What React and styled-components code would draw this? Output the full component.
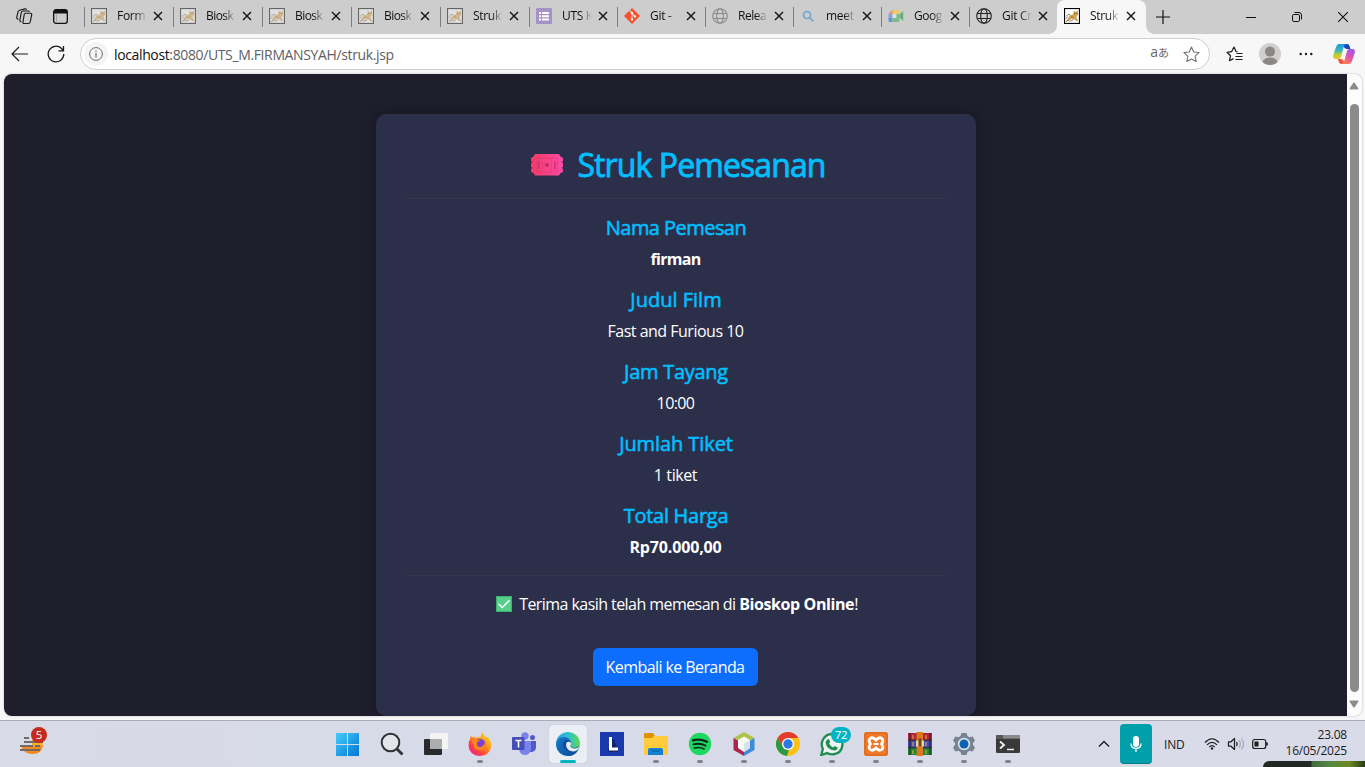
import React from "react";
import styled, { createGlobalStyle, css } from "styled-components";

const Global = createGlobalStyle`
  * { box-sizing: border-box; }
  html, body { margin: 0; padding: 0; height: 100%; overflow: hidden; }
  body { font-family: "Open Sans", "Noto Sans", "Noto Sans CJK JP", sans-serif; }
  svg { display: block; flex: none; }
`;

const Window = styled.div`
  position: relative;
  display: flex;
  flex-direction: column;
  width: 1365px;
  height: 767px;
  overflow: hidden;
  background: #f7f7f7;
`;

/* ---------- tab strip ---------- */
const TabStrip = styled.div`
  display: flex;
  height: 34px;
  flex: none;
  background: #cdcdcd;
`;
const StripTools = styled.div`
  display: flex;
  align-items: center;
  gap: 20px;
  width: 84px;
  flex: none;
  padding: 0 0 2px 16px;
`;
const TabBox = styled.div`
  position: relative;
  display: flex;
  align-items: center;
  width: ${(p) => p.$w}px;
  height: 34px;
  padding: 0 0 2px 7px;
  flex: none;
  ${(p) =>
    p.$active
      ? css`
          background: #f7f7f7;
          border-radius: 8px 8px 0 0;
          &::before, &::after {
            content: "";
            position: absolute;
            bottom: 0;
            width: 8px;
            height: 8px;
          }
          &::before { left: -8px; background: radial-gradient(circle at 0 0, transparent 7.5px, #f7f7f7 8px); }
          &::after { right: -8px; background: radial-gradient(circle at 100% 0, transparent 7.5px, #f7f7f7 8px); }
        `
      : css`
          background: linear-gradient(#7c7c7c, #7c7c7c) 0 7px / 1px 20px no-repeat;
        `}
`;
const TabTitle = styled.span`
  width: 30px;
  margin: 0 6px 0 10px;
  white-space: nowrap;
  font-size: 12px;
  line-height: 16px;
  letter-spacing: ${(p) => p.$ls ?? -0.3}px;
  color: #111;
  mask-image: linear-gradient(90deg, #000 60%, transparent 100%);
`;
const WindowControls = styled.div`
  display: flex;
  align-items: center;
  flex: 1;
  padding-bottom: 1px;
`;
const ControlCell = styled.div`
  display: flex;
  justify-content: center;
  width: 46px;
  flex: none;
  margin-left: ${(p) => p.$ml || 0}px;
`;

/* ---------- toolbar ---------- */
const Toolbar = styled.div`
  display: flex;
  align-items: center;
  height: 40px;
  flex: none;
  padding-left: 11px;
`;
const NavButtons = styled.div`
  display: flex;
  gap: 18px;
  width: 69px;
`;
const AddressBar = styled.div`
  display: flex;
  align-items: center;
  width: 1130px;
  height: 32px;
  flex: none;
  padding: 0 9px 0 8px;
  border: 1px solid #cfcfd3;
  border-radius: 16px;
  background: #fff;
`;
const InfoBadge = styled.div`
  display: flex;
  align-items: center;
  justify-content: center;
  width: 24px;
  height: 24px;
  margin: 0 6px 0 -5px;
  border-radius: 12px;
  background: #f4f4f4;
`;
const Url = styled.span`
  flex: 1;
  font-size: 14px;
  letter-spacing: -0.37px;
  color: #5f6064;
  b { font-weight: 400; color: #111; }
`;
const Translate = styled.span`
  display: flex;
  align-items: baseline;
  margin: -3px 14px 0 0;
  font-size: 14px;
  line-height: 16px;
  color: #6a6a6a;
  small { font-size: 11px; }
`;
const ToolbarActions = styled.div`
  display: flex;
  align-items: center;
  padding-left: 16px;
`;
const Avatar = styled.div`
  margin: 0 18px 0 16px;
`;
const CopilotSlot = styled.div`
  margin-left: 20px;
`;

/* ---------- page ---------- */
const Viewport = styled.div`
  display: flex;
  height: 642px;
  flex: none;
  margin: 0 3px 0 4px;
  border-radius: 8px;
  overflow: hidden;
  background: #fcfcfc;
  box-shadow: 0 0 2px rgba(0, 0, 0, 0.3);
`;
const Page = styled.main`
  display: flex;
  justify-content: center;
  align-items: flex-start;
  width: 1343px;
  height: 642px;
  flex: none;
  padding: 40px 0 0 1px;
  background: #1f1e2d;
`;
const Card = styled.section`
  width: 600px;
  height: 602px;
  padding: 30px;
  border-radius: 10px;
  background: #2c2f4a;
  box-shadow: 0 0 15px rgba(0, 0, 0, 0.3);
  text-align: center;
  color: #fff;
`;
const Title = styled.h2`
  display: flex;
  justify-content: center;
  align-items: center;
  gap: 14px;
  height: 38px;
  margin: 0;
  padding: 3px 0 0 5px;
  font-size: 32px;
  line-height: 38px;
  font-weight: 500;
  letter-spacing: -0.9px;
  color: #00bfff;
  -webkit-text-stroke: 0.8px #00bfff;
  white-space: nowrap;
`;
const Rule = styled.hr`
  height: 1px;
  margin: 16px 0;
  border: 0;
  background: #3a374d;
`;
const Label = styled.h5`
  margin: 0 0 8px;
  padding-top: 1px;
  height: 24px;
  font-size: 20px;
  line-height: 24px;
  font-weight: 500;
  letter-spacing: ${(p) => p.$ls}px;
  color: #00bfff;
  -webkit-text-stroke: 0.55px #00bfff;
`;
const Value = styled.p`
  margin: 0 0 16px;
  padding-right: 1px;
  font-size: 16px;
  line-height: 24px;
  letter-spacing: ${(p) => p.$ls}px;
  font-weight: ${(p) => (p.$strong ? 700 : 400)};
`;
const Thanks = styled.p`
  display: flex;
  justify-content: center;
  align-items: center;
  gap: 7px;
  margin: 0 0 32px;
  padding-left: 2px;
  font-size: 16px;
  line-height: 24px;
  letter-spacing: -0.56px;
  white-space: nowrap;
  b { letter-spacing: -0.4px; }
`;
const BackButton = styled.button`
  width: 165px;
  height: 38px;
  margin-right: 2px;
  padding: 0;
  border: 0;
  border-radius: 6px;
  background: #0d6efd;
  color: #fff;
  font: inherit;
  font-size: 16px;
  letter-spacing: -0.58px;
  white-space: nowrap;
`;
const Scrollbar = styled.div`
  display: flex;
  flex-direction: column;
  align-items: center;
  width: 14px;
  padding: 8px 0 8px;
`;
const Thumb = styled.div`
  width: 9px;
  height: 589px;
  margin: 14px 0 8px;
  border-radius: 5px;
  background: #8b8b8b;
`;

/* ---------- taskbar ---------- */
const Taskbar = styled.footer`
  position: relative;
  display: flex;
  height: 47px;
  margin-top: 4px;
  flex: none;
  border-top: 1px solid #a9abb5;
  background: linear-gradient(90deg, #d8dae6, #d7dae8 40%, #dadbe9);
`;
const Widgets = styled.div`
  position: relative;
  width: 326px;
  flex: none;
  padding: 12px 0 0 19px;
`;
const Count = styled.span`
  position: absolute;
  left: ${(p) => p.$x}px;
  top: ${(p) => p.$y}px;
  width: ${(p) => p.$w}px;
  height: 16px;
  border-radius: 8px;
  background: ${(p) => p.$bg};
  color: #fff;
  font-size: 11.5px;
  line-height: 16px;
  letter-spacing: -0.3px;
  text-align: center;
`;
const Apps = styled.div`
  display: flex;
  width: 704px;
  flex: none;
`;
const AppSlot = styled.div`
  position: relative;
  display: flex;
  flex-direction: column;
  align-items: center;
  width: 38px;
  height: 38px;
  margin: 4px 3px 0;
  padding-top: 7px;
  flex: none;
  border-radius: 4px;
  ${(p) => p.$active && css`background: #eceef5; box-shadow: 0 0 1px #aaaebb;`}
`;
const Running = styled.i`
  width: ${(p) => (p.$active ? 16 : 6)}px;
  height: 3px;
  margin-top: 4px;
  border-radius: 2px;
  background: ${(p) => (p.$active ? "#00b4bd" : "#82838c")};
`;
const Tray = styled.div`
  display: flex;
  align-items: center;
  flex: 1;
  padding-left: 68px;
`;
const Mic = styled.div`
  display: flex;
  align-items: center;
  justify-content: center;
  width: 32px;
  height: 40px;
  margin: 0 12px 0 10px;
  border-radius: 4px;
  background: #009fa9;
  border-bottom: 1px solid #007f87;
`;
const Lang = styled.span`
  width: 40px;
  font-size: 12px;
  letter-spacing: -0.2px;
  color: #1a1a1a;
`;
const Clock = styled.div`
  flex: 1;
  padding: 0 18px 2px 0;
  font-size: 12px;
  line-height: 16px;
  letter-spacing: -0.22px;
  text-align: right;
  white-space: nowrap;
  color: #1a1a1a;
`;
const WallpaperEdge = styled.div`
  position: absolute;
  right: 0;
  bottom: 0;
  width: 102px;
  height: 6px;
  border-radius: 7px 0 0 0;
  background: linear-gradient(90deg, #222824 0 48px, #406b3b 49px, #548744 66px, #6d8c20 86px, #263b14 102px);
`;

/* ---------- drawings ---------- */
const Close = ({ s = 10, w = 1.4 }) => (
  <svg width={s} height={s} viewBox="0 0 10 10" stroke="#111" strokeWidth={w} fill="none">
    <path d="M1 1l8 8M9 1L1 9" />
  </svg>
);

const Cat = ({ on }) => (
  <svg width="16" height="16" viewBox="0 0 16 16" opacity={on ? 1 : 0.5}>
    <rect x=".5" y=".5" width="15" height="15" fill={on ? "#fff" : "#f4f4f4"} stroke="#000" strokeWidth="1.2" />
    <path d="M2.500 13l2-3.500 1.500-2.500 3-.5.500-1.500V2.500l1.800 1.300h1.200L14 2.500v4.300l-1.500 1.700.3 2 1.700 2.800h-2l-2.700-2.300-2.600-.2-2 2z" fill="#d3a04b" />
    <path d="M2 8.500q1.500-2.500 4-2M1.800 10.500l2-1.700M5.500 13.300q3-.6 4-2.200" stroke="#777d84" strokeWidth="1" fill="none" />
    <path d="M2 13.600l3-1.800M7 8.800l2 .6" stroke="#8a6630" strokeWidth=".9" fill="none" />
    <circle cx="10.700" cy="5.200" r=".55" fill="#5b4020" /><circle cx="12.800" cy="5.200" r=".55" fill="#5b4020" />
  </svg>
);
const Globe = ({ c }) => (
  <svg width="16" height="16" viewBox="0 0 16 16" fill="none" stroke={c} strokeWidth="1.1">
    <circle cx="8" cy="8" r="7.3" />
    <ellipse cx="8" cy="8" rx="3.300" ry="7.300" />
    <path d="M1.300 5.500h13.400M1.300 10.500h13.400" />
  </svg>
);
const FormIcon = () => (
  <svg width="16" height="16" viewBox="0 0 16 16">
    <rect width="16" height="16" rx="1" fill="#a691c9" />
    <path d="M3 4h2v2H3zM6 4h7v2H6zM3 7.200h2v2H3zM6 7.200h7v2H6zM3 10.400h2v2H3zM6 10.400h7v2H6z" fill="#fff" />
  </svg>
);
const GitIcon = () => (
  <svg width="16" height="16" viewBox="0 0 16 16">
    <path d="M8 0l8 8-8 8-8-8z" fill="#f4502d" />
    <path d="M5.500 2.500L8 5v6.500M8 5.500l3 3" stroke="#e8dcd8" strokeWidth="1.100" fill="none" />
    <g fill="#eee"><circle cx="8" cy="5" r="1.200" /><circle cx="8" cy="11.500" r="1.200" /><circle cx="11" cy="8.400" r="1.200" /></g>
  </svg>
);
const SearchTab = () => (
  <svg width="16" height="16" viewBox="0 0 16 16" fill="none" stroke="#70a5d2" strokeWidth="1.700">
    <circle cx="7" cy="7" r="3.500" /><path d="M9.500 9.500l4 4" />
  </svg>
);
const Meet = () => (
  <svg width="16" height="16" viewBox="0 0 16 16">
    <path d="M4 2h7.500v4H4z" fill="#e8cc69" /><path d="M.5 6L4.500 2v4z" fill="#e9877c" />
    <path d="M.5 6h4v4h-4z" fill="#82a6df" /><path d="M.5 10h4v4h-3q-1 0-1-1z" fill="#6a93d5" />
    <path d="M4.500 10H8l3.500-2v5q0 1-1 1h-6z" fill="#79bd89" /><path d="M11.500 6.500L15.200 3v10l-3.700-3.500z" fill="#69ad77" />
    <path d="M4.500 6h4v4h-4z" fill="#dedede" /><path d="M8.500 6h3v3l-3 1z" fill="#86b68c" />
  </svg>
);
const Workspaces = () => (
  <svg width="17" height="17" viewBox="0 0 17 17" fill="none" stroke="#1b1b1b" strokeWidth="1.150" strokeLinejoin="round" strokeLinecap="round">
    <path d="M9.300 5.200h5.200q1.500 0 1.200 1.500l-1.500 7.300q-.3 1.500-1.800 1.500H8.200q-1.500 0-1.200-1.500l1.200-7.500q.3-1.300 1.100-1.300z" />
    <path d="M5 13.800q-1.400-.4-1.100-1.800L5.200 4.800Q5.500 3 7.200 3h5q.8 0 1 .5" />
    <path d="M2 11.200Q.5 10.600.8 9.200L2 3.800q.3-1.200 1.500-1.500L9 .9q1-.2 1.400.4" />
  </svg>
);
const TabActions = () => (
  <svg width="15" height="15" viewBox="0 0 15 15">
    <rect x=".7" y=".7" width="13.600" height="13.600" rx="2.300" fill="none" stroke="#111" strokeWidth="1.300" />
    <path d="M.5 4.500V3q0-2.500 2.500-2.500h9q2.500 0 2.500 2.500v1.500z" fill="#111" />
    <path d="M3 5.200h.7v8h-.7z" fill="#999" />
  </svg>
);
const Back = () => (
  <svg width="18" height="18" viewBox="0 0 18 18" fill="none" stroke="#1b1b1b" strokeWidth="1.200"><path d="M17 9H1.500M8 2L1 9l7 7" /></svg>
);
const Reload = () => (
  <svg width="18" height="18" viewBox="0 0 18 18" fill="none" stroke="#1b1b1b" strokeWidth="1.300"><path d="M16.800 9a7.800 7.800 0 1 1-2.500-5.700L16.300 5.500M16.500 1v4.800H11.500" /></svg>
);
const Info = () => (
  <svg width="14" height="14" viewBox="0 0 14 14" fill="none" stroke="#6d6d6d"><circle cx="7" cy="7" r="6.400" /><path d="M7 6v4.500M7 3.500v1.300" strokeWidth="1.200" /></svg>
);
const star = "M8 1l2.100 4.600 5 .6-3.700 3.400 1 5L8 12.200 3.600 14.600l1-5L.9 6.200l5-.6z";
const Star = () => (
  <svg width="17" height="17" viewBox="0 0 16 16" fill="none" stroke="#6f6f6f" strokeLinejoin="round"><path d={star} /></svg>
);
const Favorites = () => (
  <svg width="17" height="17" viewBox="0 0 17 17" fill="none" stroke="#1b1b1b" strokeWidth="1.200" strokeLinejoin="round">
    <path d="M11.500 5.800L10 5.500 8 1 5.700 5.600 1 6.300l3.500 3.400-1 5 4-2.100M10.500 7.500h6M9.500 10.500h7M9.500 13.500h7" />
  </svg>
);
const AvatarPic = () => (
  <svg width="22" height="22" viewBox="0 0 22 22">
    <circle cx="11" cy="11" r="11" fill="#d2d0ce" />
    <circle cx="11" cy="8.600" r="5" fill="#8b8885" />
    <path d="M3.500 19q1.500-4.500 7.500-4.500t7.500 4.500q-3 3-7.500 3t-7.500-3z" fill="#8b8885" />
  </svg>
);
const Dots = () => (
  <svg width="14" height="4" viewBox="0 0 14 4" fill="#1b1b1b"><circle cx="1.700" cy="2" r="1.200" /><circle cx="7" cy="2" r="1.200" /><circle cx="12.300" cy="2" r="1.200" /></svg>
);
const Copilot = () => (
  <svg width="22" height="22" viewBox="0 0 22 22">
    <defs>
      <linearGradient id="cpA" x1="0" y1="0" x2="0" y2="1"><stop offset="0" stopColor="#2096dc" /><stop offset=".45" stopColor="#38b8bf" /><stop offset=".7" stopColor="#b5cf35" /><stop offset="1" stopColor="#f2bf21" /></linearGradient>
      <linearGradient id="cpB" x1=".7" y1="0" x2=".2" y2="1"><stop offset="0" stopColor="#9b57ec" /><stop offset=".5" stopColor="#e353a9" /><stop offset="1" stopColor="#f98345" /></linearGradient>
    </defs>
    <path d="M11 1h3q2 0 2.500 2l1 3h-4q-2 0-3-3z" fill="#1446bd" />
    <path d="M6 1h7q-2 1-2.600 4L8 14q-.7 2-2.500 2H3Q-.7 16 .3 12L3 4Q4 1 6 1z" fill="url(#cpA)" />
    <path d="M5 16h3q2 0 3 3l-1 2H8.500Q6 21 5.600 18z" fill="#f3543a" />
    <path d="M16 21H9q2-1 2.600-4L14 8q.7-2 2.500-2H19q3.700 0 2.700 4L19 18q-1 3-3 3z" fill="url(#cpB)" />
  </svg>
);
const Ticket = () => (
  <svg width="32" height="22" viewBox="0 0 32 22">
    <defs><linearGradient id="tk"><stop stopColor="#f53a65" /><stop offset="1" stopColor="#fb4ca5" /></linearGradient></defs>
    <path d="M4 0h24l1.500 2.500L32 4v3l-1.500 1 1.500 1v4l-1.500 1 1.500 1v3l-2.500 1L28 21.500H4L2.500 19 0 18v-3l1.500-1L0 13V9l1.500-1L0 7V4l2.500-1.500z" fill="url(#tk)" />
    <g fill="none" stroke="#b92f6a" opacity=".8"><path d="M7.800 7v8M24 7v8" strokeWidth="1.500" /><path d="M5.500 4h21v14h-21zM11.500 4v14M20.500 4v14" strokeWidth=".6" opacity=".6" /></g>
    <circle cx="16" cy="11" r="1.900" fill="#b92f6a" />
  </svg>
);
const Check = () => (
  <svg width="16" height="16" viewBox="0 0 16 16"><rect width="16" height="16" rx="1" fill="#55d08a" /><rect x=".5" y=".5" width="15" height="15" rx="1" fill="none" stroke="#3eaf6c" /><path d="M3 8.300l3.300 3.200L13 4.800" fill="none" stroke="#fff" strokeWidth="1.500" strokeLinecap="round" /></svg>
);
const Arrow = ({ down }) => (
  <svg width="10" height="8" viewBox="0 0 10 8"><path d={down ? "M1 .5h8l.5 1L5.500 7.500h-1L.5 1.500z" : "M1 7.500h8l.5-1L5.500.5h-1L.5 6.500z"} fill="#8b8b8b" /></svg>
);

const Burger = () => (
  <svg width="26" height="22" viewBox="0 0 26 22">
    <path d="M2 12h22q-1 9-10.500 9T2 12z" fill="#f38a1d" /><path d="M13 7h11q0 4-1 6H13z" fill="#f8ad25" />
    <path d="M5 4h5M5 8h19M1 12h13M16 12h5M1 16h20" stroke="#706a68" strokeWidth="2" transform="translate(0 1)" />
  </svg>
);
const Svg = (p) => <svg width="24" height="24" viewBox="0 0 24 24" {...p} />;
const Windows = () => (
  <Svg>
    <defs><linearGradient id="win" x1="0" y1="0" x2="1" y2="1"><stop stopColor="#45cdfb" /><stop offset="1" stopColor="#0375d4" /></linearGradient></defs>
    <path d="M0 1H11V12H0zM12 1H23V12H12zM0 13H11V24H0zM12 13H23V24H12z" fill="url(#win)" />
  </Svg>
);
const Search = () => (
  <Svg fill="none" stroke="#303238"><circle cx="10.500" cy="10.500" r="8.800" strokeWidth="2" fill="#e3e5ec" /><path d="M16.500 16.500l6 6" strokeWidth="2.800" /></Svg>
);
const TaskView = () => (
  <Svg><rect x="0" y="7" width="18" height="16" rx="1" fill="#292a2b" /><rect x="6" y="1" width="18" height="16" rx="1" fill="#f4f4f4" /><path d="M6 7h12v10H7q-1 0-1-1z" fill="#abadaf" /></Svg>
);
const Firefox = () => (
  <Svg>
    <defs><linearGradient id="ff" x1="1" y1="0" x2=".2" y2="1"><stop stopColor="#ffe52a" /><stop offset=".45" stopColor="#ff9a18" /><stop offset=".75" stopColor="#ff4143" /><stop offset="1" stopColor="#e52486" /></linearGradient></defs>
    <path d="M14.500 0q1 4 4 5.500l1-1q4.500 4.500 3.500 11-2 8-11 8.500Q1.500 23.500.5 14 .5 9 2.500 6V4l2.500 1.500L6.500 4v2q4-1 6-1Q13 2 14.500 0z" fill="url(#ff)" />
    <circle cx="12" cy="12.500" r="5.800" fill="#6a49d8" />
    <path d="M3 7q4-2 7 1l3 .5q-1 2-3.500 2 0 3 4 3.500 4-1 3-5 3 2 1.500 6-2 4-6.500 3.500-6-1-6-5.500z" fill="#ff8420" /><circle cx="12" cy="12" r="3" fill="#7c3fd4" />
  </Svg>
);
const Teams = () => (
  <Svg><circle cx="13" cy="4" r="3.700" fill="#7b83eb" /><circle cx="20.500" cy="5.500" r="2.500" fill="#5059c9" /><path d="M16 9h8v7q-1 4-5 4h-3z" fill="#5059c9" /><path d="M8 9h11v8q-1 6-6 6t-6-6z" fill="#7b83eb" /><rect y="5" width="12.500" height="13" rx="1" fill="#464eb8" /><path d="M3.500 8.500h6M6.500 8.500v7" stroke="#fff" strokeWidth="1.600" /></Svg>
);
const Edge = () => (
  <Svg>
    <defs>
      <linearGradient id="eA"><stop stopColor="#249ddf" /><stop offset=".5" stopColor="#2cc2cf" /><stop offset="1" stopColor="#61d84f" /></linearGradient>
      <linearGradient id="eB" x1="0" y1="0" x2="1" y2="1"><stop stopColor="#1679cb" /><stop offset="1" stopColor="#0c4896" /></linearGradient>
    </defs>
    <circle cx="12" cy="12" r="12" fill="url(#eA)" />
    <path d="M0 12q1-7 8-7 6 0 7 6-2-1-4 .5Q8 16 13 19q4 2 9-1-3 6-10 6Q1 23 0 12z" fill="url(#eB)" />
    <path d="M7 11q2-4 6-2.500 2 1.500 1.500 4 0 2.500 3 3.500 3 0 5-2 1 1-1 4.500-4 3-9 1-6-3-5.500-8.500z" fill="#0c4f9d" />
    <path d="M11 10q4-1 4 2-2 3 2.500 4.500 3 .5 6-2-1 3-3 4-4 2-8-.5-4-4-1.500-8z" fill="#eceef5" />
  </Svg>
);
const LApp = () => (
  <Svg><rect width="24" height="24" fill="#1939ad" /><path d="M8 18l5-12 5 12v2H9z" fill="#102567" /><path d="M10.500 5v12H18" stroke="#fff" strokeWidth="3" fill="none" /></Svg>
);
const Folder = () => (
  <Svg><path d="M0 2q0-1 1-1h8l2 3h-1v4H0z" fill="#dc9300" /><path d="M0 6h8l2-2h14v18q0 1-1 1H1q-1 0-1-1z" fill="#ffcc3d" /><path d="M4 23v-5q0-2 2-2h11q2 0 2 2v5z" fill="#1380d1" /><path d="M8 19h7" stroke="#075b9d" /></Svg>
);
const Spotify = () => (
  <Svg><circle cx="12" cy="12" r="11.200" fill="#1ed760" /><g fill="none" stroke="#12251a" strokeLinecap="round"><path d="M5 8.300q7-2 14 1.500" strokeWidth="2.300" /><path d="M5.500 12.300q6.500-1.700 12 1.300" strokeWidth="1.900" /><path d="M6.300 16q5.500-1.300 9.800 1" strokeWidth="1.500" /></g></Svg>
);
const NetBeans = () => (
  <Svg><path d="M12 0l10.500 6L12 12 1.500 6z" fill="#adc448" /><path d="M1.500 6L12 12v12L1.500 18z" fill="#ad2450" /><path d="M22.500 6L12 12v12l10.500-6z" fill="#3d8cdc" /><path d="M12 4.500l6 3.500v8l-6 4-6-4V8z" fill="#f7f9f3" /><path d="M12 11.500l6-3.500v8l-6 4z" fill="#d5e1ee" /></Svg>
);
const Chrome = () => (
  <Svg><circle cx="12" cy="12" r="12" fill="#fbc116" /><path d="M1.600 6A12 12 0 0 1 22.400 6H12L7 15z" fill="#e33b2e" /><path d="M1.600 6L7 15l6 2-2 7A12 12 0 0 1 1.600 6z" fill="#269847" /><circle cx="12" cy="12" r="6" fill="#fff" /><circle cx="12" cy="12" r="4.700" fill="#2c78e7" /></Svg>
);
const WhatsApp = () => (
  <Svg><path d="M1.300 23l1.500-6Q.5 12 3 7.500 6 2 12 2q10 1 10.500 10Q22 22 12 22.300q-3 0-5-1.200z" fill="#eef2f0" stroke="#218c52" strokeWidth="2.300" /><path d="M7 8q1.500-2 2.300 0l.8 2-1 1.500q1.500 3 4 4l1.500-1.500 3 1.500q0 2.500-3 3-8-1-9-8 0-1.500 1.400-2.500z" fill="#218c52" /></Svg>
);
const Xampp = () => (
  <Svg><rect width="24" height="24" rx="2" fill="#f07a29" /><rect x="1" y="1" width="22" height="22" rx="2" fill="none" stroke="#d86319" /><path d="M6 6.500q3-2 6 1.500 3-3.500 6-1.500 2 2.500-.5 5.500 2.500 3 .5 5.500-3 2-6-1.500-3 3.500-6 1.500-2-2.500.5-5.500Q4 9 6 6.500z" fill="none" stroke="#fff" strokeWidth="2.700" /><path d="M9.500 12h5" stroke="#fff" strokeWidth="2" /></Svg>
);
const WinRar = () => (
  <Svg><path d="M0 1h24v7H0z" fill="#b2233f" /><path d="M0 8.500h24v7H0z" fill="#444bb5" /><path d="M0 16h24v7H0z" fill="#24843a" /><path d="M2 1v22M22 1v22" stroke="#171717" strokeWidth="1.500" opacity=".6" /><path d="M0 8.300h24M0 15.700h24" stroke="#20202b" /><path d="M18 3v4M18 10v4M18 18v4M5 3v4M5 10v4M5 18v4" stroke="#e4b941" /><path d="M8.500 0h6.500v24H8.500z" fill="#db7920" /><path d="M8 8.500h8v6H8z" fill="#ebd394" /><path d="M10.500 6.500h3v8h-3z" fill="#6f451d" /></Svg>
);
const Gear = () => (
  <Svg><path d="M9.500 1h5l1 3 2 1.200 3.200-.7 2.300 4-2 2.500v2l2 2.500-2.300 4-3.200-.7-2 1.200-1 3h-5l-1-3-2-1.200-3.200.7-2.300-4L3 13v-2L1 8.500l2.300-4 3.200.7 2-1.200z" fill="#788391" /><circle cx="12" cy="12" r="6.200" fill="#d9e0e8" /><circle cx="12" cy="12" r="4.500" fill="#0d63b4" /></Svg>
);
const Terminal = () => (
  <Svg><rect y="3" width="24" height="18" rx="1.300" fill="#39393a" /><path d="M1 3h22l1 1v3H0V4z" fill="#575859" /><path d="M7 3h17v3.500H7z" fill="#8a8b8c" /><path d="M4 9.500l4 3.500-4 3.500" fill="none" stroke="#eee" strokeWidth="1.900" /><path d="M11 17.500h7" stroke="#eee" strokeWidth="1.500" /></Svg>
);

const tabs = [
  { w: 89, icon: <Cat />, title: "Form" },
  { w: 89, icon: <Cat />, title: "Biosk", ls: -0.55 },
  { w: 89, icon: <Cat />, title: "Biosk", ls: -0.55 },
  { w: 89, icon: <Cat />, title: "Biosk", ls: -0.55 },
  { w: 89, icon: <Cat />, title: "Struk" },
  { w: 88, icon: <FormIcon />, title: "UTS K" },
  { w: 88, icon: <GitIcon />, title: "Git -" },
  { w: 88, icon: <Globe c="#8b8b8b" />, title: "Relea", ls: -0.45 },
  { w: 88, icon: <SearchTab />, title: "meet" },
  { w: 88, icon: <Meet />, title: "Goog", ls: -0.45 },
  { w: 88, icon: <Globe c="#222" />, title: "Git Cr" },
  { w: 89, icon: <Cat on />, title: "Struk", active: true },
];

const apps = [
  { icon: <Windows /> },
  { icon: <Search /> },
  { icon: <TaskView /> },
  { icon: <Firefox />, run: true },
  { icon: <Teams /> },
  { icon: <Edge />, run: true, active: true },
  { icon: <LApp /> },
  { icon: <Folder />, run: true },
  { icon: <Spotify />, run: true },
  { icon: <NetBeans />, run: true },
  { icon: <Chrome />, run: true },
  { icon: <WhatsApp />, run: true, count: "72" },
  { icon: <Xampp />, run: true },
  { icon: <WinRar />, run: true },
  { icon: <Gear />, run: true },
  { icon: <Terminal />, run: true },
];

const details = [
  { label: "Nama Pemesan", ls: -0.55, value: "firman", strong: true, vls: -0.7 },
  { label: "Judul Film", ls: 0, value: "Fast and Furious 10", vls: -0.5 },
  { label: "Jam Tayang", ls: -0.28, value: "10:00", vls: -0.6 },
  { label: "Jumlah Tiket", ls: -0.08, value: "1 tiket", vls: -0.4 },
  { label: "Total Harga", ls: -0.28, value: "Rp70.000,00", strong: true, vls: -0.15 },
];

export default function App() {
  return (
    <Window>
      <Global />
      <TabStrip>
        <StripTools>
          <Workspaces />
          <TabActions />
        </StripTools>
        {tabs.map((t, i) => (
          <TabBox key={i} $w={t.w} $active={t.active}>
            {t.icon}
            <TabTitle $ls={t.ls}>{t.title}</TabTitle>
            <Close />
          </TabBox>
        ))}
        <WindowControls>
          <ControlCell $ml={-6}>
            <svg width="14" height="14" viewBox="0 0 14 14" stroke="#111" strokeWidth="1.2"><path d="M7 0v14M0 7h14" /></svg>
          </ControlCell>
          <ControlCell $ml={42}>
            <svg width="10" height="10" viewBox="0 0 10 10" stroke="#111"><path d="M0 5.500h10" /></svg>
          </ControlCell>
          <ControlCell>
            <svg width="10" height="10" viewBox="0 0 10 10" fill="none" stroke="#111"><rect x=".5" y="2.500" width="7" height="7" rx="1.300" /><path d="M2.500.5H7q2.500 0 2.500 2.500v4.500" /></svg>
          </ControlCell>
          <ControlCell>
            <Close s={12} w={0.9} />
          </ControlCell>
        </WindowControls>
      </TabStrip>

      <Toolbar>
        <NavButtons>
          <Back />
          <Reload />
        </NavButtons>
        <AddressBar>
          <InfoBadge><Info /></InfoBadge>
          <Url><b>localhost</b>:8080/UTS_M.FIRMANSYAH/struk.jsp</Url>
          <Translate>a<small>あ</small></Translate>
          <Star />
        </AddressBar>
        <ToolbarActions>
          <Favorites />
          <Avatar><AvatarPic /></Avatar>
          <Dots />
          <CopilotSlot><Copilot /></CopilotSlot>
        </ToolbarActions>
      </Toolbar>

      <Viewport>
        <Page>
          <Card>
            <Title><Ticket /><span>Struk Pemesanan</span></Title>
            <Rule />
            {details.map((d) => (
              <React.Fragment key={d.label}>
                <Label $ls={d.ls}>{d.label}</Label>
                <Value $strong={d.strong} $ls={d.vls}>{d.value}</Value>
              </React.Fragment>
            ))}
            <Rule />
            <Thanks><Check /><span>Terima kasih telah memesan di <b>Bioskop Online</b>!</span></Thanks>
            <BackButton>Kembali ke Beranda</BackButton>
          </Card>
        </Page>
        <Scrollbar>
          <Arrow />
          <Thumb />
          <Arrow down />
        </Scrollbar>
      </Viewport>

      <Taskbar>
        <Widgets>
          <Burger />
          <Count $x={31} $y={6} $w={16} $bg="#c42b1c">5</Count>
        </Widgets>
        <Apps>
          {apps.map((a, i) => (
            <AppSlot key={i} $active={a.active}>
              {a.icon}
              {a.run && <Running $active={a.active} />}
              {a.count && <Count $x={18} $y={2} $w={20} $bg="#00b4c4">{a.count}</Count>}
            </AppSlot>
          ))}
        </Apps>
        <Tray>
          <svg width="12" height="8" viewBox="0 0 12 8" fill="none" stroke="#1b1b1b" strokeWidth="1.300"><path d="M1 6.500l5-5 5 5" /></svg>
          <Mic>
            <svg width="12" height="16" viewBox="0 0 12 16"><rect x="3" width="6" height="11" rx="3" fill="#fff" /><path d="M1 7.500q0 5 5 5t5-5M6 12.500V16" stroke="#fff" strokeWidth="1.300" fill="none" /></svg>
          </Mic>
          <Lang>IND</Lang>
          <svg width="66" height="14" viewBox="0 0 66 14" fill="none" stroke="#1b1b1b" strokeWidth="1.200">
            <path d="M1 5.500q7-7.500 14 0M3 7.800q5-5 10 0M5.300 10q2.700-2.700 5.400 0" />
            <circle cx="8" cy="11.500" r="1.200" fill="#1b1b1b" stroke="none" />
            <path d="M24.500 4.800h2.500L30.500 1.500v11L27 9.200h-2.500z" strokeLinejoin="round" />
            <path d="M32.500 4.800q1.500 2.200 0 4.400" /><path d="M35 3q2.800 4 0 8M37.500 1.500q4 5.500 0 11" stroke="#a4a6b0" />
            <rect x="48.700" y="2.500" width="13" height="9" rx="2" /><path d="M50.500 4.500h4v5h-4z" fill="#1b1b1b" stroke="none" /><path d="M63 5.500v3" strokeWidth="1.700" />
          </svg>
          <Clock>23.08<br />16/05/2025</Clock>
        </Tray>
        <WallpaperEdge />
      </Taskbar>
    </Window>
  );
}
